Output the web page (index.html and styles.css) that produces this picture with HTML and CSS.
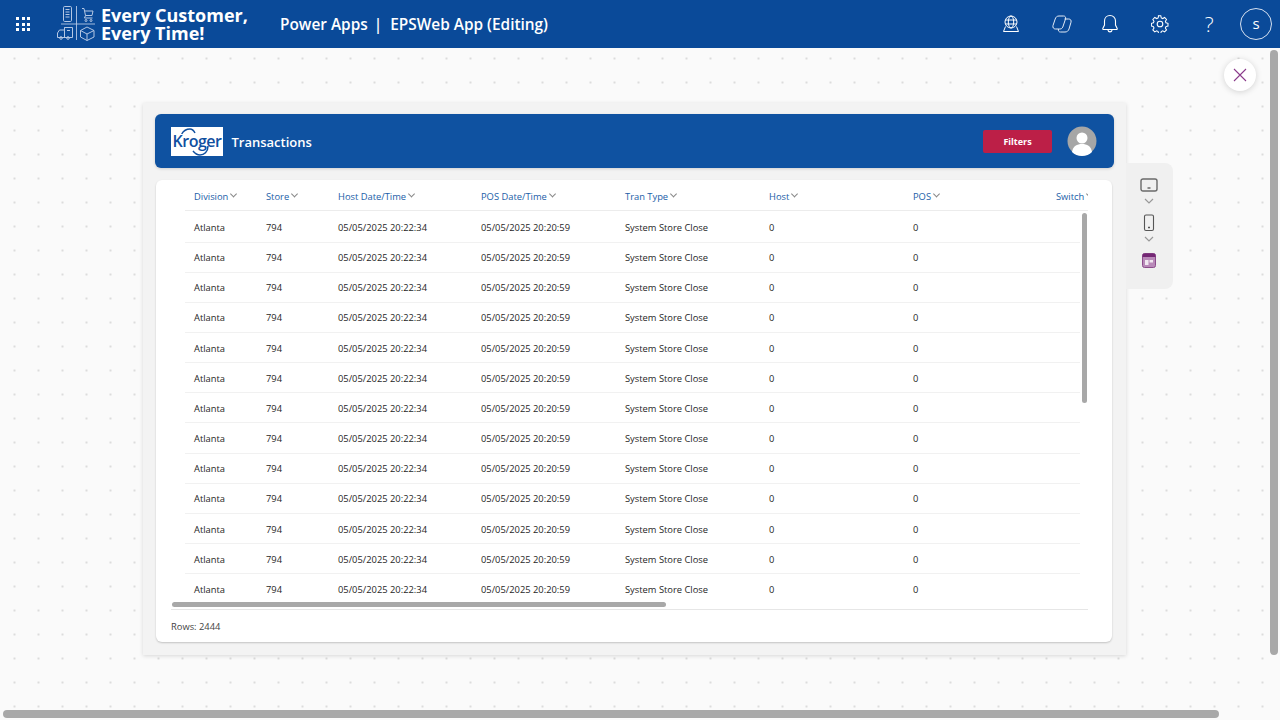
FILE: index.html
```html
<!DOCTYPE html>
<html lang="en">
<head>
    <meta charset="UTF-8">
    <title>Power Apps | EPSWeb App (Editing)</title>
    <link rel="stylesheet" href="styles.css">
</head>
<body>

<header class="topbar">
    <div class="launcher">
        <i></i><i></i><i></i><i></i><i></i><i></i><i></i><i></i><i></i>
    </div>
    <svg class="brand-icon" width="40" height="38" viewBox="0 0 40 38" fill="none" stroke="#b4c7e4" stroke-width="1">
        <path d="M5 19h34M20.500 1v34" stroke-width="0.900"/>
        <rect x="7.500" y="1.500" width="8" height="15" rx="1.200"/>
        <path d="M9.500 4.500h4M9.500 7h4M9.500 9.500h4M9.500 12h4"/>
        <path d="M26 3.500h2l1.500 7h6.500l1-4.500h-8M29.500 10.500l-1 2.500h8"/>
        <circle cx="30" cy="15.500" r="1"/><circle cx="35" cy="15.500" r="1"/>
        <path d="M1.500 28l2-3h5v-2.500h8v10H1.500zM8.500 22.500v10M11 25.500h3"/>
        <circle cx="5" cy="33" r="1.300"/><circle cx="12" cy="33" r="1.300"/>
        <path d="M24.500 25.500l6.500-3.500 7 3.500v6.500l-7 3.500-6.500-3.500zM24.500 25.500l6.500 3.500 7-3.500M31 29v6.500"/>
    </svg>
    <div class="brand-text">Every Customer,<br>Every Time!</div>
    <div class="app-title">Power Apps <span class="app-sep">|</span> EPSWeb App (Editing)</div>

    <nav class="top-icons">
        <div class="top-btn">
            <svg width="18" height="18" viewBox="0 0 18 18" fill="none" stroke="#fff" stroke-width="1">
                <circle cx="9" cy="7" r="6"/>
                <ellipse cx="9" cy="7" rx="2.700" ry="6"/>
                <path d="M3.200 5h11.600M3.200 9h11.600"/>
                <path d="M3.500 11.500L1.500 16.500h15l-2-5"/>
            </svg>
        </div>
        <div class="top-btn copilot">
            <svg width="20" height="18" viewBox="0 0 20 18" fill="none" stroke="#e3ebf6" stroke-width="1">
                <path d="M7 1h4.500c1.800 0 2.500 1.300 2 3l-2.700 8c-.5 1.300-1.500 2-3 2H3.500C1.500 14 .5 12.500 1 10.500L3.200 4C3.800 2 5 1 7 1z"/>
                <path d="M12.500 4H16.500c2 0 3 1.300 2.500 3.200l-2 6.800c-.7 2-2 3-4 3H8.500c-1.800 0-2.500-1.300-2-3"/>
            </svg>
        </div>
        <div class="top-btn">
            <svg width="18" height="20" viewBox="0 0 18 20" fill="none" stroke="#fff" stroke-width="1.100">
                <path d="M9 1.500c-3.300 0-5.500 2.400-5.500 5.600v3.900L1.800 14.500c-.2.500.1 1 .7 1h13c.6 0 .9-.5.700-1L14.500 11V7.100C14.500 3.900 12.300 1.500 9 1.500z"/>
                <path d="M6.800 15.700c.2 1.300 1 2.200 2.200 2.200s2-.9 2.200-2.200"/>
            </svg>
        </div>
        <div class="top-btn">
            <svg width="18" height="18" viewBox="0 0 18 18" fill="none" stroke="#fff" stroke-width="1.100">
                <circle cx="9" cy="9" r="2.800"/>
                <path d="M7.500 1.200h3l.5 2.200 1.500.7 2-1.100 2 2.100-1.200 1.900.6 1.500 2.100.6v2.800l-2.100.6-.6 1.500 1.200 1.900-2 2.100-2-1.100-1.500.7-.5 2.200" transform="translate(-.3 -.4) scale(.96)"/>
                <path d="M7.500 1.200l-.5 2.200-1.500.7-2-1.100-2 2.100 1.200 1.900-.6 1.500-2.100.6v2.800l2.100.6.6 1.500-1.200 1.900 2 2.100 2-1.100 1.500.7.5 2.200h3" transform="translate(.4 -.4) scale(.96)"/>
            </svg>
        </div>
        <div class="top-btn help">?</div>
        <div class="avatar-ring">s</div>
    </nav>
</header>

<main class="canvas">
    <button class="close-btn" aria-label="Close">
        <svg width="14" height="14" viewBox="0 0 14 14" stroke="#8a3a8a" stroke-width="1.100"><path d="M1 1l12 12M13 1L1 13"/></svg>
    </button>

    <section class="frame">
        <div class="app-head">
            <div class="kroger">
                <svg class="kroger-arc" width="52" height="29" viewBox="0 0 52 29" fill="none" stroke="#0f4f9f" stroke-width="1.500">
                    <path d="M10.700 7C13 3 16 2 19 2c2 0 4 2 5 4"/>
                    <path d="M37 19c0 6-4 9-8 9-3 0-5-1.500-7-4"/>
                </svg>
                <span>Kroger</span>
            </div>
            <h1>Transactions</h1>
            <button class="filters">Filters</button>
            <svg class="user-pic" width="30" height="30" viewBox="0 0 30 30">
                <circle cx="15" cy="15" r="14.500" fill="#a6a6a6"/>
                <circle cx="15" cy="12" r="5.500" fill="#fff"/>
                <path d="M5 26c1-6 5-8 10-8s9 2 10 8c-2.500 2.500-6 4-10 4s-7.500-1.500-10-4z" fill="#fff"/>
            </svg>
        </div>

        <div class="card">
            <div class="grid-wrap">
                <div class="grid-row grid-header">
                    <div>Division<b class="caret"></b></div>
                    <div>Store<b class="caret"></b></div>
                    <div>Host Date/Time<b class="caret"></b></div>
                    <div>POS Date/Time<b class="caret"></b></div>
                    <div>Tran Type<b class="caret"></b></div>
                    <div>Host<b class="caret"></b></div>
                    <div>POS<b class="caret"></b></div>
                    <div>Switch<b class="caret"></b></div>
                </div>
                <div class="grid-body">
                    <div class="grid-row"><div>Atlanta</div><div>794</div><div>05/05/2025 20:22:34</div><div>05/05/2025 20:20:59</div><div>System Store Close</div><div>0</div><div>0</div><div></div></div>
                    <div class="grid-row"><div>Atlanta</div><div>794</div><div>05/05/2025 20:22:34</div><div>05/05/2025 20:20:59</div><div>System Store Close</div><div>0</div><div>0</div><div></div></div>
                    <div class="grid-row"><div>Atlanta</div><div>794</div><div>05/05/2025 20:22:34</div><div>05/05/2025 20:20:59</div><div>System Store Close</div><div>0</div><div>0</div><div></div></div>
                    <div class="grid-row"><div>Atlanta</div><div>794</div><div>05/05/2025 20:22:34</div><div>05/05/2025 20:20:59</div><div>System Store Close</div><div>0</div><div>0</div><div></div></div>
                    <div class="grid-row"><div>Atlanta</div><div>794</div><div>05/05/2025 20:22:34</div><div>05/05/2025 20:20:59</div><div>System Store Close</div><div>0</div><div>0</div><div></div></div>
                    <div class="grid-row"><div>Atlanta</div><div>794</div><div>05/05/2025 20:22:34</div><div>05/05/2025 20:20:59</div><div>System Store Close</div><div>0</div><div>0</div><div></div></div>
                    <div class="grid-row"><div>Atlanta</div><div>794</div><div>05/05/2025 20:22:34</div><div>05/05/2025 20:20:59</div><div>System Store Close</div><div>0</div><div>0</div><div></div></div>
                    <div class="grid-row"><div>Atlanta</div><div>794</div><div>05/05/2025 20:22:34</div><div>05/05/2025 20:20:59</div><div>System Store Close</div><div>0</div><div>0</div><div></div></div>
                    <div class="grid-row"><div>Atlanta</div><div>794</div><div>05/05/2025 20:22:34</div><div>05/05/2025 20:20:59</div><div>System Store Close</div><div>0</div><div>0</div><div></div></div>
                    <div class="grid-row"><div>Atlanta</div><div>794</div><div>05/05/2025 20:22:34</div><div>05/05/2025 20:20:59</div><div>System Store Close</div><div>0</div><div>0</div><div></div></div>
                    <div class="grid-row"><div>Atlanta</div><div>794</div><div>05/05/2025 20:22:34</div><div>05/05/2025 20:20:59</div><div>System Store Close</div><div>0</div><div>0</div><div></div></div>
                    <div class="grid-row"><div>Atlanta</div><div>794</div><div>05/05/2025 20:22:34</div><div>05/05/2025 20:20:59</div><div>System Store Close</div><div>0</div><div>0</div><div></div></div>
                    <div class="grid-row"><div>Atlanta</div><div>794</div><div>05/05/2025 20:22:34</div><div>05/05/2025 20:20:59</div><div>System Store Close</div><div>0</div><div>0</div><div></div></div>
                </div>
                <div class="thumb-v"></div>
                <div class="thumb-h"></div>
            </div>
            <div class="card-foot">Rows: 2444</div>
        </div>
    </section>

    <aside class="side-panel">
        <svg width="18" height="14" viewBox="0 0 18 14" fill="none" stroke="#6a6a6a" stroke-width="1.400"><rect x="1" y="1" width="16" height="12" rx="2"/><path d="M7.500 10h3" stroke-width="1.500"/></svg>
        <svg class="chev chev-1" width="10" height="6" viewBox="0 0 10 6" fill="none" stroke="#999" stroke-width="1.200"><path d="M1 1l4 4 4-4"/></svg>
        <svg class="phone" width="12" height="18" viewBox="0 0 12 18" fill="none" stroke="#555" stroke-width="1.100"><rect x="1.500" y="1" width="9" height="15.500" rx="1.500"/><path d="M5 13.500h2" stroke-width="1.500"/></svg>
        <svg class="chev chev-2" width="10" height="6" viewBox="0 0 10 6" fill="none" stroke="#999" stroke-width="1.200"><path d="M1 1l4 4 4-4"/></svg>
        <svg class="page-ico" width="14" height="15" viewBox="0 0 14 15"><rect x=".5" y=".5" width="13" height="14" rx="2" fill="#b98ab9" stroke="#8c4c8c"/><path d="M.5 4V2.500a2 2 0 0 1 2-2h9a2 2 0 0 1 2 2V4z" fill="#742774"/><path d="M3 7h3.500v5H3zM7.500 7H11v2.500H7.500z" fill="#f2e8f2"/></svg>
    </aside>

    <div class="page-scroll-v"></div>
    <div class="page-scroll-h"></div>
</main>

</body>
</html>
```

FILE: styles.css
```css
* {
    box-sizing: border-box;
}
html, body {
    margin: 0;
    height: 100%;
    overflow: hidden;
}
body {
    font-family: 'Open Sans', 'Noto Sans', sans-serif;
    background: #fafafa;
    display: flex;
    flex-direction: column;
}

/* top bar */
.topbar {
    height: 48px;
    background: #0a4a99;
    color: white;
    display: flex;
    align-items: center;
    flex: none;
}
.launcher {
    width: 14px;
    margin-left: 16px;
    display: grid;
    grid-template-columns: repeat(3, 3px);
    gap: 2.5px;
}
.launcher i {
    width: 3px;
    height: 3px;
    background: white;
}
.brand-icon {
    margin-left: 26px;
    margin-right: 5px;
}
.brand-text {
    font-size: 18px;
    font-weight: 700;
    line-height: 18px;
    width: 179px;
    white-space: nowrap;
}
.app-title {
    font-size: 15.400px;
    font-weight: 600;
    white-space: nowrap;
}
.app-sep {
    margin: 0 4px 0 2px;
}
.top-icons {
    margin-left: auto;
    display: flex;
    align-items: center;
    padding-right: 8px;
}
.top-btn {
    width: 49.500px;
    height: 48px;
    display: flex;
    align-items: center;
    justify-content: center;
}
.copilot {
    padding-left: 2px;
}
.help {
    font-size: 21px;
    font-weight: 300;
}
.avatar-ring {
    width: 32px;
    height: 32px;
    margin-left: 6px;
    border: 1px solid #d5e0f0;
    border-radius: 50%;
    display: flex;
    align-items: center;
    justify-content: center;
    font-size: 15px;
    padding-bottom: 2px;
}

/* canvas, the frame sits on it like a window */
.canvas {
    flex: 1;
    position: relative;
    background-color: #fafafa;
    background-image: radial-gradient(circle at center, #dcdcdc 0, #dcdcdc 0.9px, transparent 1.1px);
    background-size: 24px 24px;
    background-position: 2.500px -1.500px;
}
.close-btn {
    position: absolute;
    left: 1224px;
    top: 11px;
    width: 32px;
    height: 32px;
    border: none;
    border-radius: 50%;
    background: white;
    box-shadow: 0 1px 6px rgba(0, 0, 0, 0.16);
    display: flex;
    align-items: center;
    justify-content: center;
    padding: 0;
}
.frame {
    position: absolute;
    left: 143px;
    top: 55px;
    width: 983px;
    height: 552px;
    background: #f3f3f3;
    box-shadow: 0 1px 4px rgba(0, 0, 0, 0.14);
    padding: 11px 12px 13px 12px;
    display: flex;
    flex-direction: column;
}
.app-head {
    height: 54px;
    flex: none;
    background: #0f52a1;
    border-radius: 6px;
    box-shadow: 0 1px 3px rgba(0, 0, 0, 0.15);
    display: flex;
    align-items: center;
    padding: 0 17px 0 16px;
}
.kroger {
    width: 52px;
    height: 29px;
    background: white;
    position: relative;
    display: flex;
    align-items: center;
    justify-content: center;
    color: #0f4f9f;
    font-size: 16px;
    font-weight: 600;
    letter-spacing: -0.5px;
}
.kroger-arc {
    position: absolute;
    left: 0;
    top: 0;
}
.app-head h1 {
    margin: 1px 0 0 8.500px;
    font-size: 13px;
    font-weight: 600;
    color: white;
}
.filters {
    margin-left: auto;
    width: 69px;
    height: 23px;
    background: #bc1f47;
    border: none;
    border-radius: 2px;
    color: white;
    font-family: inherit;
    font-size: 9px;
    font-weight: 700;
    padding: 0;
}
.user-pic {
    margin-left: 15px;
}
.card {
    flex: 1;
    margin: 12px 2px 0 1px;
    background: white;
    border-radius: 6px;
    box-shadow: 0 1px 2px rgba(0, 0, 0, 0.2);
    display: flex;
    flex-direction: column;
}
.grid-wrap {
    height: 430px;
    flex: none;
    margin: 0 24px 0 15px;
    border-bottom: 1px solid #e6e6e6;
    position: relative;
    overflow: hidden;
}
.grid-row {
    display: grid;
    grid-template-columns: 72px 72px 143px 144px 144px 144px 143px 143.500px;
    height: 30.170px;
    margin-left: 14px;
    padding-left: 9px;
    padding-top: 1px;
    width: 895px;
    align-items: center;
    border-bottom: 1px solid #f1f1f1;
    font-size: 9.350px;
    color: #1f1f1f;
    white-space: nowrap;
}
.grid-header {
    height: 31px;
    width: 904px;
    padding-top: 2px;
    color: #1b5ea8;
    border-bottom-color: #ececec;
}
.grid-body {
    padding-top: 1.400px;
}
.grid-body .grid-row:last-child {
    border-bottom: none;
}
.caret {
    display: inline-block;
    width: 5px;
    height: 5px;
    margin-left: 3px;
    border-right: 1px solid #888;
    border-bottom: 1px solid #888;
    transform: translateY(-3.500px) rotate(45deg);
}
.thumb-v {
    position: absolute;
    right: 1px;
    top: 33px;
    width: 5px;
    height: 190px;
    border-radius: 3px;
    background: #a8a8a8;
}
.thumb-h {
    position: absolute;
    left: 1px;
    top: 422px;
    width: 494px;
    height: 5px;
    border-radius: 3px;
    background: #a8a8a8;
}
.card-foot {
    padding: 10px 0 0 15px;
    font-size: 9.350px;
    color: #444;
}

/* device picker next to the frame */
.side-panel {
    position: absolute;
    left: 1126px;
    top: 115px;
    width: 47px;
    height: 126px;
    background: #f0f0f0;
    border-radius: 0 8px 8px 0;
    display: flex;
    flex-direction: column;
    align-items: center;
    padding: 15px 1px 0 0;
}
.chev-1 {
    margin-top: 6px;
}
.phone {
    margin-top: 10px;
}
.chev-2 {
    margin-top: 4px;
}
.page-ico {
    margin-top: 11px;
}

/* page scrollbars */
.page-scroll-v {
    position: absolute;
    left: 1270px;
    top: 2px;
    width: 8px;
    height: 605px;
    border-radius: 4px;
    background: #a8a8a8;
}
.page-scroll-h {
    position: absolute;
    left: 3px;
    top: 662px;
    width: 1216px;
    height: 8px;
    border-radius: 4px;
    background: #a8a8a8;
}
```
